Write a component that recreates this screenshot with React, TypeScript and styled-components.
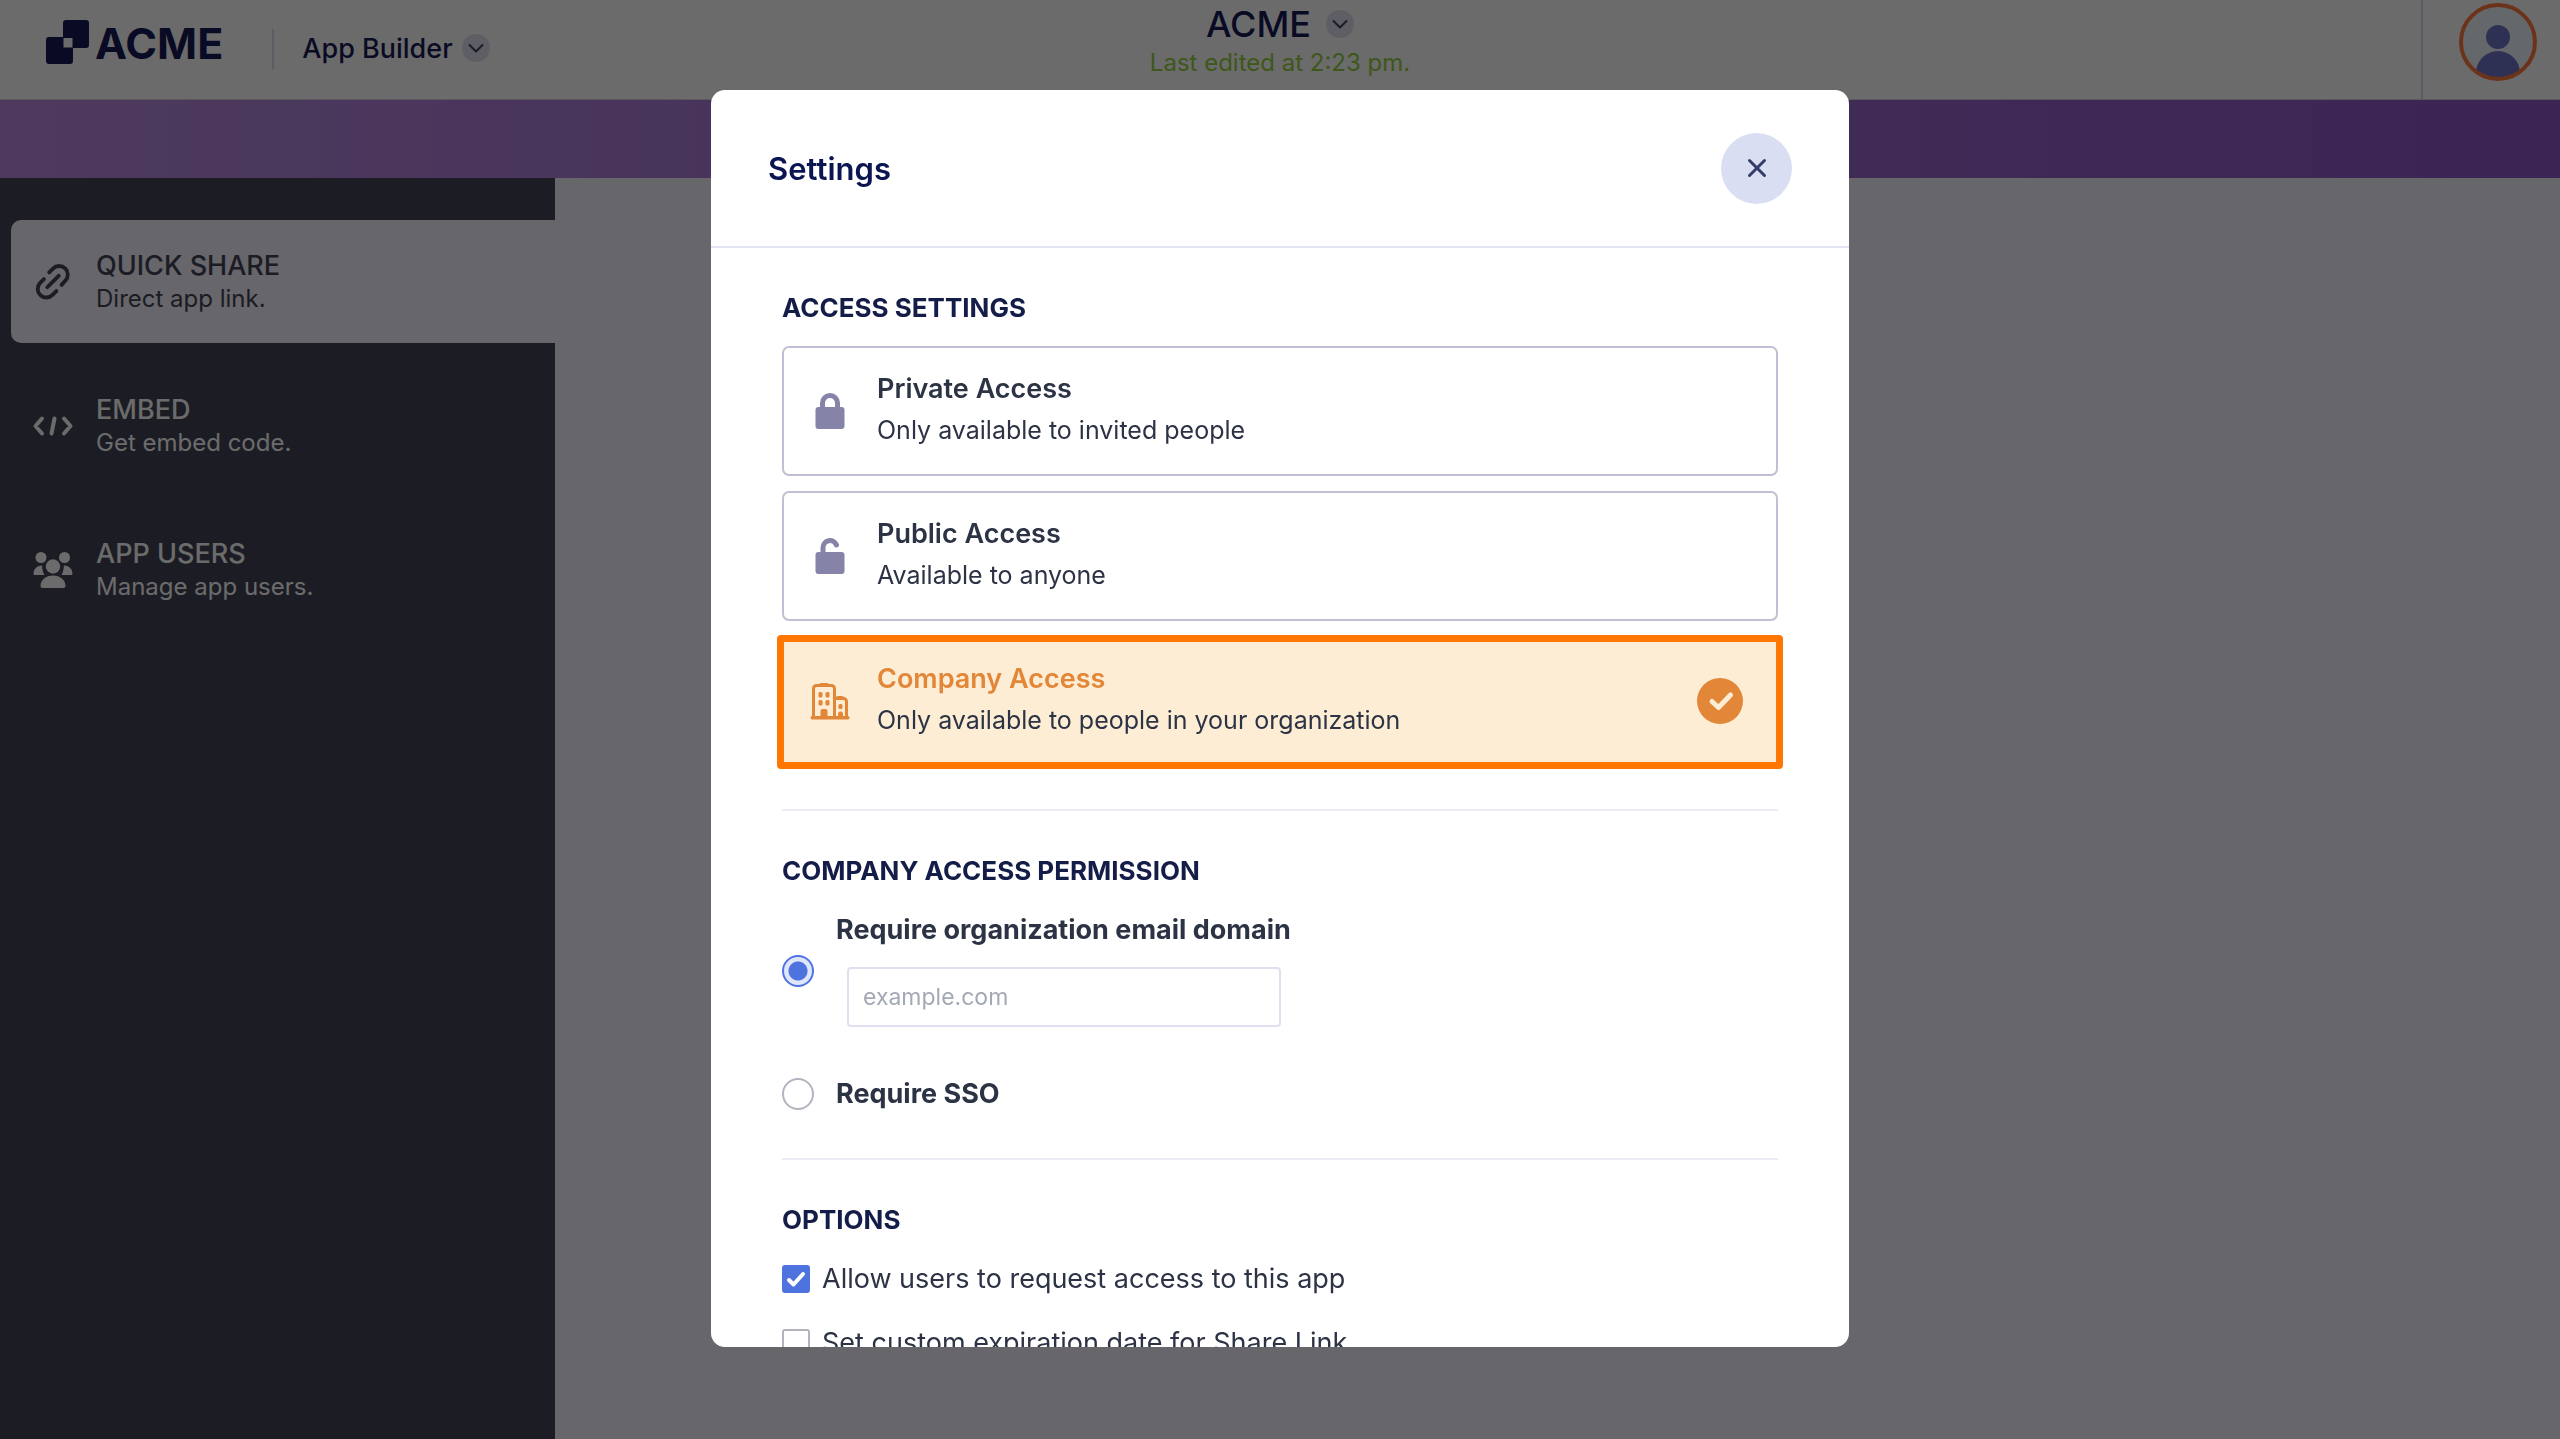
import React from "react";
import styled, { createGlobalStyle, css } from "styled-components";

const GlobalStyle = createGlobalStyle`
  *, *::before, *::after { box-sizing: border-box; }
  body {
    margin: 0;
    font-family: Inter, "Liberation Sans", Arial, sans-serif;
    color: #2c3345;
    background: #f5f3fe;
  }
  button, input { font: inherit; color: inherit; }
  h1, h2, p { margin: 0; }
`;

const Page = styled.div`
  display: flex;
  flex-direction: column;
  height: 100vh;
  overflow: hidden;
`;

const TopBar = styled.header`
  display: grid;
  grid-template-columns: 1fr auto 1fr;
  flex: none;
  height: 100px;
  background: #ffffff;
  border-bottom: 1px solid #d8d6ec;
`;

const BrandArea = styled.div`
  display: flex;
  align-items: flex-start;
  padding: 20px 0 0 46px;
`;

const Brand = styled.a`
  display: flex;
  align-items: flex-start;
  gap: 6px;
  color: #171c56;
  text-decoration: none;
`;

const BrandName = styled.span`
  font-size: 43px;
  font-weight: 700;
  line-height: 46px;
`;

const BrandDivider = styled.span`
  width: 2px;
  height: 40px;
  margin: 9px 28px 0 49px;
  background: #dcdcee;
`;

const MenuButton = styled.button`
  display: flex;
  align-items: center;
  gap: 9px;
  height: 56px;
  padding: 0;
  border: 0;
  background: none;
  color: #171c56;
  font-size: 27px;
  font-weight: 500;
`;

const TitleArea = styled.div`
  display: flex;
  flex-direction: column;
  align-items: center;
`;

const TitleButton = styled.button`
  display: flex;
  align-items: center;
  gap: 15px;
  height: 48px;
  padding: 0;
  border: 0;
  background: none;
  color: #171c56;
  font-size: 36px;
  font-weight: 500;
`;

const Chip = styled.span`
  display: grid;
  place-items: center;
  width: 28px;
  height: 28px;
  border-radius: 50%;
  background: #dfdff0;
  color: #404060;
`;

const LastEdited = styled.p`
  font-size: 24px;
  line-height: 30px;
  color: #93d03f;
`;

const AccountArea = styled.div`
  display: flex;
  justify-content: flex-end;
`;

const AccountButton = styled.button`
  display: flex;
  align-items: flex-start;
  padding: 3px 23px 0 36px;
  border: 0;
  border-left: 2px solid #dadaf0;
  background: none;
`;

const Banner = styled.div`
  flex: none;
  height: 78px;
  background: linear-gradient(90deg, #b98be0, #8c58c8);
`;

const Body = styled.div`
  display: flex;
  flex: 1;
`;

const Sidebar = styled.nav`
  display: flex;
  flex-direction: column;
  gap: 21px;
  width: 555px;
  padding: 42px 0 0 11px;
  background: #434356;
`;

const NavItem = styled.a<{ $active?: boolean }>`
  display: flex;
  align-items: center;
  gap: 22px;
  height: 123px;
  padding-left: 21px;
  border-radius: 10px 0 0 10px;
  text-decoration: none;
  color: #ffffff;
  ${(p) => p.$active && css`
    background: #f5f3fe;
    color: #434356;
  `}
`;

const NavTitle = styled.span`
  display: block;
  font-size: 27px;
  font-weight: 500;
  line-height: 34px;
`;

const NavText = styled.span`
  display: block;
  font-size: 24px;
  line-height: 32px;
`;

const Overlay = styled.div`
  position: fixed;
  inset: 0;
  display: flex;
  justify-content: center;
  padding: 90px 24px 92px;
  background: rgba(0, 0, 0, 0.58);
`;

const Dialog = styled.section`
  display: flex;
  flex-direction: column;
  width: 100%;
  max-width: 1138px;
  overflow: hidden;
  border-radius: 14px;
  background: #ffffff;
`;

const DialogHeader = styled.header`
  display: flex;
  align-items: center;
  justify-content: space-between;
  flex: none;
  height: 158px;
  padding: 0 57px;
  border-bottom: 2px solid #e3e5f5;
`;

const DialogTitle = styled.h1`
  font-size: 31px;
  font-weight: 600;
  color: #0a1551;
`;

const CloseButton = styled.button`
  display: grid;
  place-items: center;
  width: 71px;
  height: 71px;
  padding: 0;
  border: 0;
  border-radius: 50%;
  background: #dadef3;
  color: #343c6a;
`;

const DialogBody = styled.div`
  flex: 1;
  overflow-y: auto;
  scrollbar-width: none;
  padding: 0 71px;
`;

const Section = styled.section`
  padding: 44px 0 43px;
  & + & { border-top: 2px solid #ebebf4; }
`;

const SectionTitle = styled.h2`
  font-size: 26px;
  font-weight: 700;
  line-height: 32px;
  color: #141c48;
`;

const CardList = styled.div`
  display: flex;
  flex-direction: column;
  gap: 15px;
  margin-top: 22px;
`;

const Card = styled.button<{ $selected?: boolean }>`
  position: relative;
  display: flex;
  align-items: center;
  height: 130px;
  padding: 0 33px 0 25px;
  border: 2px solid #c0bfd6;
  border-radius: 7px;
  background: #ffffff;
  text-align: left;
  ${(p) => p.$selected && css`
    border-color: #fcedd4;
    background: #fcedd4;
    &::after {
      content: "";
      position: absolute;
      inset: -3px -7px -5px;
      border: 7px solid #ff7600;
      border-radius: 4px;
    }
  `}
`;

const CardIcon = styled.span`
  display: grid;
  place-items: center;
  width: 42px;
  margin-right: 26px;
`;

const CardText = styled.span`
  flex: 1;
  padding-bottom: 2px;
`;

const CardTitle = styled.span<{ $selected?: boolean }>`
  display: block;
  font-size: 27px;
  font-weight: 600;
  line-height: 40px;
  color: ${(p) => (p.$selected ? "#e28638" : "#2c3345")};
`;

const CardHint = styled.span`
  display: block;
  font-size: 25px;
  line-height: 42px;
`;

const RadioList = styled.div`
  display: flex;
  flex-direction: column;
  gap: 51px;
  margin-top: 27px;
  padding-bottom: 5px;
`;

const RadioRow = styled.div`
  display: flex;
  align-items: center;
  gap: 22px;
`;

const Radio = styled.input`
  appearance: none;
  flex: none;
  width: 32px;
  height: 32px;
  margin: 0;
  border: 2px solid #b4b3bf;
  border-radius: 50%;
  background: #ffffff;
  &:checked {
    border-color: #4f74e3;
    background: radial-gradient(circle, #4f73de 0 9px, #dfe6fa 10px);
  }
`;

const RadioLabel = styled.label`
  display: block;
  font-size: 27px;
  font-weight: 700;
  line-height: 32px;
`;

const DomainInput = styled.input`
  display: block;
  width: 434px;
  height: 60px;
  margin: 21px 0 0 11px;
  padding: 0 14px;
  border: 2px solid #e1e0f0;
  border-radius: 4px;
  background: #ffffff;
  font-size: 23px;
  &::placeholder { color: #a3a9b5; opacity: 1; }
`;

const CheckList = styled.div`
  display: flex;
  flex-direction: column;
  gap: 32px;
  margin-top: 27px;
`;

const CheckRow = styled.label`
  display: flex;
  align-items: center;
  gap: 12px;
  font-size: 27px;
  line-height: 32px;
`;

const CheckBoxCell = styled.span`
  display: grid;
  place-items: center;
  & > * { grid-area: 1 / 1; }
  & > svg { z-index: 1; pointer-events: none; }
`;

const CheckBox = styled.input`
  appearance: none;
  width: 28px;
  height: 28px;
  margin: 0;
  border: 2px solid #b4b3bf;
  border-radius: 3px;
  background: #ffffff;
  &:checked {
    border-color: #4f73de;
    background: #4f73de;
  }
`;

const LogoMark = () => (
  <svg width="43" height="44" viewBox="0 0 43 44" aria-hidden="true">
    <path
      fill="currentColor"
      fillRule="evenodd"
      d="M20 0H40a3 3 0 0 1 3 3V25a3 3 0 0 1-3 3H27V41a3 3 0 0 1-3 3H3a3 3 0 0 1-3-3V20a3 3 0 0 1 3-3H17V3a3 3 0 0 1 3-3ZM17.500 18V27.500H26.500V18Z"
    />
  </svg>
);

const Chevron = () => (
  <svg width="16" height="10" viewBox="0 0 16 10" fill="none" stroke="currentColor" strokeWidth="2" strokeLinecap="round" strokeLinejoin="round" aria-hidden="true">
    <path d="M1.500 2l6.500 6.500 6.500-6.500" />
  </svg>
);

const Avatar = () => (
  <svg width="78" height="78" viewBox="0 0 78 78" aria-hidden="true">
    <defs>
      <clipPath id="avatar-clip"><circle cx="39" cy="39" r="36" /></clipPath>
    </defs>
    <circle cx="39" cy="39" r="37" fill="#f1f7ff" />
    <g clipPath="url(#avatar-clip)" fill="#7075c9">
      <circle cx="39" cy="34" r="12" />
      <circle cx="39" cy="70" r="22" />
    </g>
    <circle cx="39" cy="39" r="37" fill="none" stroke="#ff7a3f" strokeWidth="4" />
  </svg>
);

const LinkIcon = () => (
  <svg width="42" height="42" viewBox="-1 -1 44 44" fill="none" stroke="currentColor" strokeWidth="4" strokeLinecap="round" aria-hidden="true">
    <path d="M17 11l4-4a8.500 8.500 0 0 1 13 12.500l-4 4.500" />
    <path d="M11.500 18l-4 4a8.500 8.500 0 0 0 13 12.500l4-4" />
    <path d="M15 26.500l12-12" />
  </svg>
);

const CodeIcon = () => (
  <svg width="42" height="42" viewBox="0 0 42 42" fill="none" stroke="currentColor" strokeWidth="4" strokeLinecap="round" strokeLinejoin="round" aria-hidden="true">
    <path d="M10 13.500L3.500 21l6.500 7.500M32 13.500L38.500 21 32 28.500M22.500 13.500L19.500 28.500" />
  </svg>
);

const UsersIcon = () => (
  <svg width="42" height="42" viewBox="0 0 42 42" fill="currentColor" aria-hidden="true">
    <circle cx="9" cy="8.500" r="5.500" />
    <circle cx="32.500" cy="8.500" r="5.500" />
    <circle cx="21" cy="17.500" r="7.200" />
    <path d="M1.500 25c0-5 3.500-8.500 8.500-8.500.5 4.500.8 6.500 2.500 9.500H2.500a1 1 0 0 1-1-1ZM40.500 25c0-5-3.500-8.500-8.500-8.500-.5 4.500-.8 6.500-2.500 9.500h10a1 1 0 0 0 1-1ZM8.500 37c0-6 5.500-10.500 12.500-10.500S33.500 31 33.500 37c0 1.200-.8 2-2 2h-21c-1.200 0-2-.8-2-2Z" />
  </svg>
);

const CloseIcon = () => (
  <svg width="20" height="20" viewBox="0 0 20 20" fill="none" stroke="currentColor" strokeWidth="3" strokeLinecap="round" aria-hidden="true">
    <path d="M2.500 2.500l15 15M17.500 2.500l-15 15" />
  </svg>
);

const LockIcon = ({ open }: { open?: boolean }) => (
  <svg width="30" height="36" viewBox="0 0 30 36" aria-hidden="true">
    <rect x="0.500" y="14" width="29" height="22" rx="3" fill="#8683a8" />
    <path
      d={open ? "M8 16V9.500a7 7 0 0 1 13.500-2.500" : "M7.500 16V10a7.500 7.500 0 0 1 15 0V16"}
      fill="none"
      stroke="#8683a8"
      strokeWidth="5"
      strokeLinecap="round"
    />
  </svg>
);

const BuildingIcon = () => (
  <svg width="40" height="38" viewBox="0 0 40 38" fill="#e28638" aria-hidden="true">
    <path fill="none" stroke="#e28638" strokeWidth="3" strokeLinejoin="round" d="M3.500 35V6.500a3 3 0 0 1 3-3h15a3 3 0 0 1 3 3V35M24.500 16.500h9a3 3 0 0 1 3 3V35" />
    <rect x="9" y="1" width="10" height="4" rx="2" />
    <rect x="26" y="14" width="8" height="4" rx="2" />
    <rect x="0.500" y="34" width="39" height="3.500" rx="1.700" />
    <rect x="8.500" y="10" width="4" height="5.500" rx="1.500" />
    <rect x="15.500" y="10" width="4" height="5.500" rx="1.500" />
    <rect x="8.500" y="18" width="4" height="5.500" rx="1.500" />
    <rect x="15.500" y="18" width="4" height="5.500" rx="1.500" />
    <rect x="28.500" y="22" width="4" height="5" rx="1.500" />
    <path d="M10.500 35v-6a2 2 0 0 1 2-2h3a2 2 0 0 1 2 2v6ZM28 35v-3a2.500 2.500 0 0 1 5 0v3Z" />
  </svg>
);

const SelectedMark = () => (
  <svg width="46" height="46" viewBox="0 0 46 46" aria-hidden="true">
    <circle cx="23" cy="23" r="23" fill="#e28638" />
    <path d="M15 23.500l6.500 6 12-12.500" fill="none" stroke="#fcedd4" strokeWidth="5" strokeLinecap="round" strokeLinejoin="round" />
  </svg>
);

const Tick = () => (
  <svg width="20" height="18" viewBox="0 0 20 18" fill="none" stroke="#ffffff" strokeWidth="4" strokeLinecap="round" strokeLinejoin="round" aria-hidden="true">
    <path d="M3 10l4.500 4.500L17 4" />
  </svg>
);

const navItems = [
  { title: "QUICK SHARE", text: "Direct app link.", icon: <LinkIcon />, active: true },
  { title: "EMBED", text: "Get embed code.", icon: <CodeIcon />, active: false },
  { title: "APP USERS", text: "Manage app users.", icon: <UsersIcon />, active: false },
];

const accessLevels = [
  { title: "Private Access", hint: "Only available to invited people", icon: <LockIcon />, selected: false },
  { title: "Public Access", hint: "Available to anyone", icon: <LockIcon open />, selected: false },
  { title: "Company Access", hint: "Only available to people in your organization", icon: <BuildingIcon />, selected: true },
];

export default function App() {
  return (
    <>
      <GlobalStyle />
      <Page>
        <TopBar>
          <BrandArea>
            <Brand href="#home">
              <LogoMark />
              <BrandName>ACME</BrandName>
            </Brand>
            <BrandDivider />
            <MenuButton type="button">
              App Builder
              <Chip><Chevron /></Chip>
            </MenuButton>
          </BrandArea>
          <TitleArea>
            <TitleButton type="button">
              ACME
              <Chip><Chevron /></Chip>
            </TitleButton>
            <LastEdited>Last edited at 2:23 pm.</LastEdited>
          </TitleArea>
          <AccountArea>
            <AccountButton type="button" aria-label="Account">
              <Avatar />
            </AccountButton>
          </AccountArea>
        </TopBar>
        <Banner />
        <Body>
          <Sidebar>
            {navItems.map((item) => (
              <NavItem key={item.title} href="#share" $active={item.active}>
                {item.icon}
                <span>
                  <NavTitle>{item.title}</NavTitle>
                  <NavText>{item.text}</NavText>
                </span>
              </NavItem>
            ))}
          </Sidebar>
        </Body>
      </Page>
      <Overlay>
        <Dialog role="dialog" aria-modal="true" aria-labelledby="settings-title">
          <DialogHeader>
            <DialogTitle id="settings-title">Settings</DialogTitle>
            <CloseButton type="button" aria-label="Close"><CloseIcon /></CloseButton>
          </DialogHeader>
          <DialogBody>
            <Section>
              <SectionTitle>ACCESS SETTINGS</SectionTitle>
              <CardList>
                {accessLevels.map((level) => (
                  <Card key={level.title} type="button" aria-pressed={level.selected} $selected={level.selected}>
                    <CardIcon>{level.icon}</CardIcon>
                    <CardText>
                      <CardTitle $selected={level.selected}>{level.title}</CardTitle>
                      <CardHint>{level.hint}</CardHint>
                    </CardText>
                    {level.selected && <SelectedMark />}
                  </Card>
                ))}
              </CardList>
            </Section>
            <Section>
              <SectionTitle>COMPANY ACCESS PERMISSION</SectionTitle>
              <RadioList>
                <RadioRow>
                  <Radio type="radio" id="by-domain" name="permission" defaultChecked />
                  <div>
                    <RadioLabel htmlFor="by-domain">Require organization email domain</RadioLabel>
                    <DomainInput type="text" placeholder="example.com" aria-label="Organization email domain" />
                  </div>
                </RadioRow>
                <RadioRow>
                  <Radio type="radio" id="by-sso" name="permission" />
                  <RadioLabel htmlFor="by-sso">Require SSO</RadioLabel>
                </RadioRow>
              </RadioList>
            </Section>
            <Section>
              <SectionTitle>OPTIONS</SectionTitle>
              <CheckList>
                <CheckRow>
                  <CheckBoxCell>
                    <CheckBox type="checkbox" defaultChecked />
                    <Tick />
                  </CheckBoxCell>
                  Allow users to request access to this app
                </CheckRow>
                <CheckRow>
                  <CheckBoxCell>
                    <CheckBox type="checkbox" />
                  </CheckBoxCell>
                  Set custom expiration date for Share Link
                </CheckRow>
              </CheckList>
            </Section>
          </DialogBody>
        </Dialog>
      </Overlay>
    </>
  );
}
